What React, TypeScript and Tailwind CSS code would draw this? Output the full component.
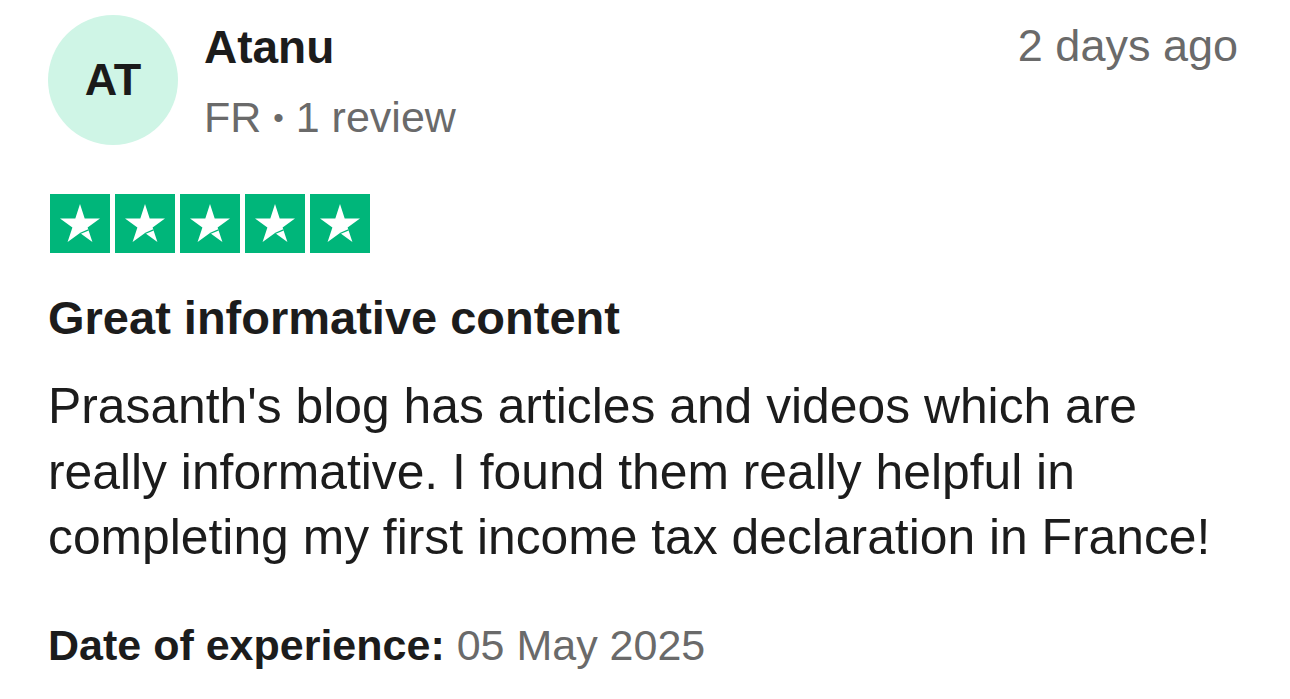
import React from 'react'

const Star = () => (
  <div className="flex h-[59px] w-[60px] items-center justify-center bg-[#00b67a]">
    <svg viewBox="0 0 60 60" className="h-[60px] w-[60px]">
      <polygon
        fill="#fff"
        points="30,10 34.7,24.5 50,24.5 37.6,33.5 42.4,48 30,39 17.6,48 22.4,33.5 10,24.5 25.3,24.5"
      />
      <line x1="30" y1="39.5" x2="38.5" y2="35.8" stroke="#00b67a" strokeWidth="1.3" />
    </svg>
  </div>
)

const App = () => {
  return (
    <div className="min-h-screen bg-white pl-[48px] pr-[52px] pt-[15px] font-['Liberation_Sans',Arial,sans-serif] text-[#1c1c1c]">
      <div className="flex items-start">
        <div className="flex h-[130px] w-[130px] shrink-0 items-center justify-center rounded-full bg-[#cff5e6]">
          <span className="text-[45px] font-bold text-[#1a1a1a]">AT</span>
        </div>
        <div className="ml-[26px] flex flex-1 flex-col">
          <span className="mt-[2px] text-[46px] font-bold leading-[60px]">Atanu</span>
          <span className="mt-[15px] text-[43px] leading-[50px] text-[#6a6a6a]">
            FR <span className="text-[30px] align-[4px]">•</span> 1 review
          </span>
        </div>
        <span className="mt-[6px] text-[45px] leading-[50px] text-[#6a6a6a]">2 days ago</span>
      </div>

      <div className="mt-[49px] flex gap-[5px] pl-[2px]">
        <Star />
        <Star />
        <Star />
        <Star />
        <Star />
      </div>

      <h2 className="mt-[40px] text-[47px] font-bold leading-[50px]">Great informative content</h2>

      <p className="mt-[31px] text-[49.8px] leading-[65.5px] text-[#1c1c1c]">
        Prasanth's blog has articles and videos which are
        <br />
        really informative. I found them really helpful in
        <br />
        completing my first income tax declaration in France!
      </p>

      <div className="mt-[49px] text-[43px] leading-[50px]">
        <span className="font-bold">Date of experience:</span>{' '}
        <span className="text-[#6a6a6a]">05 May 2025</span>
      </div>
    </div>
  )
}

export default App
